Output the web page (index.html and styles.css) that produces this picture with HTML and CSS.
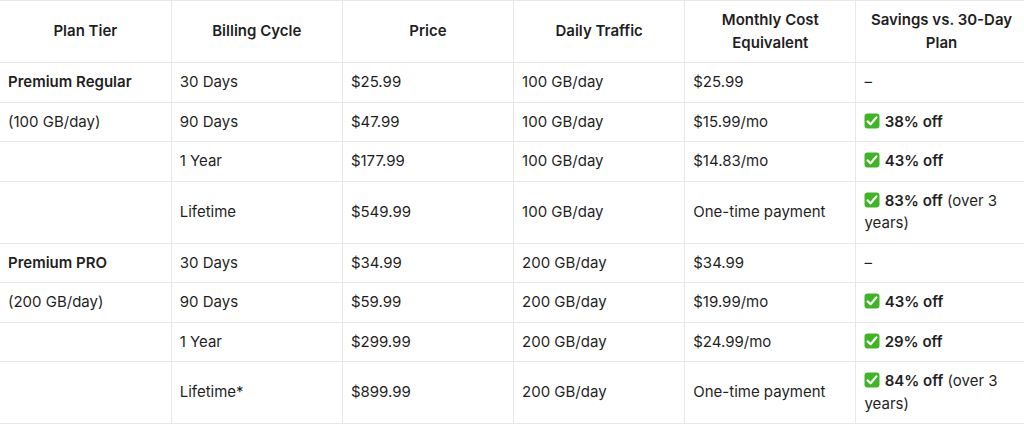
FILE: index.html
```html
<!DOCTYPE html>
<html>
<head>
<meta charset="utf-8">
<link rel="stylesheet" href="styles.css">
</head>
<body>
<svg width="0" height="0" class="defs">
  <defs>
    <symbol id="check" viewBox="0 0 16 16">
      <rect x="0.5" y="0.5" width="15" height="15" rx="3" fill="#3fb526"/>
      <path d="M3.6 8.4 L6.6 11.3 L12.4 4.4" fill="none" stroke="#fff" stroke-width="2.2" stroke-linecap="round" stroke-linejoin="round"/>
    </symbol>
  </defs>
</svg>
<table class="plans">
  <colgroup><col><col><col><col><col><col></colgroup>
  <thead>
    <tr>
      <th>Plan Tier</th>
      <th>Billing Cycle</th>
      <th>Price</th>
      <th>Daily Traffic</th>
      <th>Monthly Cost Equivalent</th>
      <th>Savings vs. 30-Day Plan</th>
    </tr>
  </thead>
  <tbody>
    <tr>
      <td><strong>Premium Regular</strong></td>
      <td>30 Days</td><td>$25.99</td><td>100 GB/day</td><td>$25.99</td><td>–</td>
    </tr>
    <tr>
      <td>(100 GB/day)</td>
      <td>90 Days</td><td>$47.99</td><td>100 GB/day</td><td>$15.99/mo</td>
      <td><svg class="ck"><use href="#check"/></svg> <strong>38% off</strong></td>
    </tr>
    <tr>
      <td></td>
      <td>1 Year</td><td>$177.99</td><td>100 GB/day</td><td>$14.83/mo</td>
      <td><svg class="ck"><use href="#check"/></svg> <strong>43% off</strong></td>
    </tr>
    <tr>
      <td></td>
      <td>Lifetime</td><td>$549.99</td><td>100 GB/day</td><td>One-time payment</td>
      <td><svg class="ck"><use href="#check"/></svg> <strong>83% off</strong> (over 3 years)</td>
    </tr>
    <tr>
      <td><strong>Premium PRO</strong></td>
      <td>30 Days</td><td>$34.99</td><td>200 GB/day</td><td>$34.99</td><td>–</td>
    </tr>
    <tr>
      <td>(200 GB/day)</td>
      <td>90 Days</td><td>$59.99</td><td>200 GB/day</td><td>$19.99/mo</td>
      <td><svg class="ck"><use href="#check"/></svg> <strong>43% off</strong></td>
    </tr>
    <tr>
      <td></td>
      <td>1 Year</td><td>$299.99</td><td>200 GB/day</td><td>$24.99/mo</td>
      <td><svg class="ck"><use href="#check"/></svg> <strong>29% off</strong></td>
    </tr>
    <tr>
      <td></td>
      <td>Lifetime*</td><td>$899.99</td><td>200 GB/day</td><td>One-time payment</td>
      <td><svg class="ck"><use href="#check"/></svg> <strong>84% off</strong> (over 3 years)</td>
    </tr>
  </tbody>
</table>
</body>
</html>
```
FILE: styles.css
```css
html, body {
  margin: 0;
  padding: 0;
  background: #ffffff;
}
.defs {
  position: absolute;
  width: 0;
  height: 0;
}
.plans {
  width: 1027px;
  table-layout: fixed;
  border-collapse: collapse;
  font-family: Inter, "Liberation Sans", sans-serif;
  font-size: 15px;
  line-height: 22.5px;
  color: #1f1f1f;
}
.plans col {
  width: 171.2px;
}
.plans th,
.plans td {
  border: 1px solid #e8e8e8;
  padding: 8px 8px;
  vertical-align: middle;
  text-align: left;
  font-weight: 400;
}
.plans th {
  text-align: center;
  font-weight: 600;
}
.plans th:first-child,
.plans td:first-child {
  border-left: none;
}
.plans strong {
  font-weight: 600;
}
.ck {
  width: 16px;
  height: 16px;
  vertical-align: -2px;
}
```
